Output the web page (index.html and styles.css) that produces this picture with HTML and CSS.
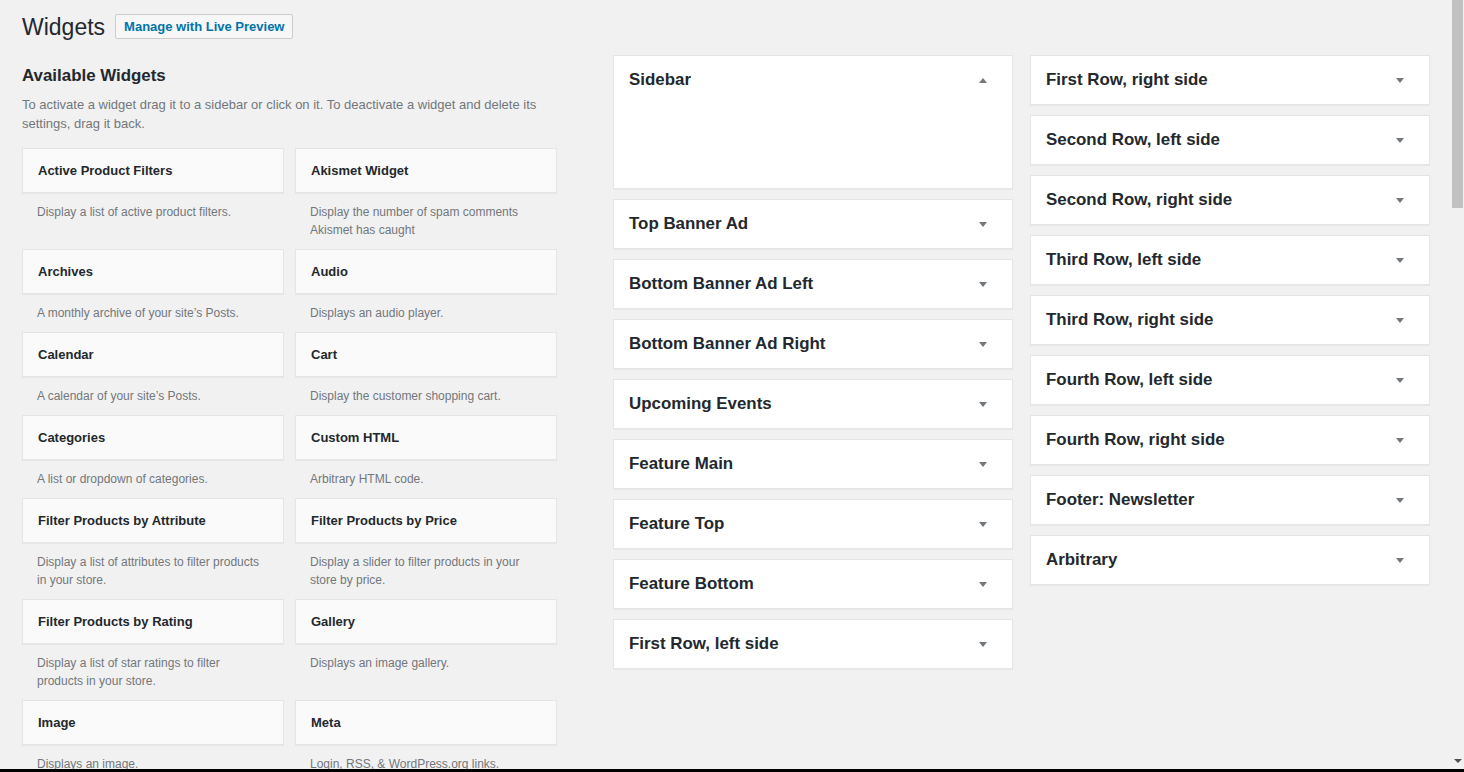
FILE: index.html
```html
<!DOCTYPE html>
<html lang="en">
<head>
<meta charset="utf-8">
<title>Widgets</title>
<link rel="stylesheet" href="styles.css">
</head>
<body>
<div class="wrap">
  <div class="page-header">
    <h1 class="page-title">Widgets</h1>
    <a class="title-action" href="#">Manage with Live Preview</a>
  </div>

  <div class="columns">
    <section class="available">
      <h2 class="section-title">Available Widgets</h2>
      <p class="section-desc">To activate a widget drag it to a sidebar or click on it. To deactivate a widget and delete its settings, drag it back.</p>
      <div class="widget-grid">
        <div class="widget"><div class="widget-top">Active Product Filters</div><div class="widget-desc">Display a list of active product filters.</div></div>
        <div class="widget"><div class="widget-top">Akismet Widget</div><div class="widget-desc">Display the number of spam comments Akismet has caught</div></div>
        <div class="widget"><div class="widget-top">Archives</div><div class="widget-desc">A monthly archive of your site’s Posts.</div></div>
        <div class="widget"><div class="widget-top">Audio</div><div class="widget-desc">Displays an audio player.</div></div>
        <div class="widget"><div class="widget-top">Calendar</div><div class="widget-desc">A calendar of your site’s Posts.</div></div>
        <div class="widget"><div class="widget-top">Cart</div><div class="widget-desc">Display the customer shopping cart.</div></div>
        <div class="widget"><div class="widget-top">Categories</div><div class="widget-desc">A list or dropdown of categories.</div></div>
        <div class="widget"><div class="widget-top">Custom HTML</div><div class="widget-desc">Arbitrary HTML code.</div></div>
        <div class="widget"><div class="widget-top">Filter Products by Attribute</div><div class="widget-desc">Display a list of attributes to filter products in your store.</div></div>
        <div class="widget"><div class="widget-top">Filter Products by Price</div><div class="widget-desc">Display a slider to filter products in your store by price.</div></div>
        <div class="widget"><div class="widget-top">Filter Products by Rating</div><div class="widget-desc">Display a list of star ratings to filter products in your store.</div></div>
        <div class="widget"><div class="widget-top">Gallery</div><div class="widget-desc">Displays an image gallery.</div></div>
        <div class="widget"><div class="widget-top">Image</div><div class="widget-desc">Displays an image.</div></div>
        <div class="widget"><div class="widget-top">Meta</div><div class="widget-desc">Login, RSS, &amp; WordPress.org links.</div></div>
        <div class="widget"><div class="widget-top">Navigation Menu</div><div class="widget-desc">Add a navigation menu to your sidebar.</div></div>
        <div class="widget"><div class="widget-top">Pages</div><div class="widget-desc">A list of your site’s Pages.</div></div>
      </div>
    </section>

    <section class="sidebars">
      <div class="sidebar-box open">
        <div class="sidebar-head"><h3 class="sidebar-name">Sidebar</h3><span class="arrow up"></span></div>
        <div class="sidebar-body"></div>
      </div>
      <div class="sidebar-box"><div class="sidebar-head"><h3 class="sidebar-name">Top Banner Ad</h3><span class="arrow"></span></div></div>
      <div class="sidebar-box"><div class="sidebar-head"><h3 class="sidebar-name">Bottom Banner Ad Left</h3><span class="arrow"></span></div></div>
      <div class="sidebar-box"><div class="sidebar-head"><h3 class="sidebar-name">Bottom Banner Ad Right</h3><span class="arrow"></span></div></div>
      <div class="sidebar-box"><div class="sidebar-head"><h3 class="sidebar-name">Upcoming Events</h3><span class="arrow"></span></div></div>
      <div class="sidebar-box"><div class="sidebar-head"><h3 class="sidebar-name">Feature Main</h3><span class="arrow"></span></div></div>
      <div class="sidebar-box"><div class="sidebar-head"><h3 class="sidebar-name">Feature Top</h3><span class="arrow"></span></div></div>
      <div class="sidebar-box"><div class="sidebar-head"><h3 class="sidebar-name">Feature Bottom</h3><span class="arrow"></span></div></div>
      <div class="sidebar-box"><div class="sidebar-head"><h3 class="sidebar-name">First Row, left side</h3><span class="arrow"></span></div></div>
    </section>

    <section class="sidebars">
      <div class="sidebar-box"><div class="sidebar-head"><h3 class="sidebar-name">First Row, right side</h3><span class="arrow"></span></div></div>
      <div class="sidebar-box"><div class="sidebar-head"><h3 class="sidebar-name">Second Row, left side</h3><span class="arrow"></span></div></div>
      <div class="sidebar-box"><div class="sidebar-head"><h3 class="sidebar-name">Second Row, right side</h3><span class="arrow"></span></div></div>
      <div class="sidebar-box"><div class="sidebar-head"><h3 class="sidebar-name">Third Row, left side</h3><span class="arrow"></span></div></div>
      <div class="sidebar-box"><div class="sidebar-head"><h3 class="sidebar-name">Third Row, right side</h3><span class="arrow"></span></div></div>
      <div class="sidebar-box"><div class="sidebar-head"><h3 class="sidebar-name">Fourth Row, left side</h3><span class="arrow"></span></div></div>
      <div class="sidebar-box"><div class="sidebar-head"><h3 class="sidebar-name">Fourth Row, right side</h3><span class="arrow"></span></div></div>
      <div class="sidebar-box"><div class="sidebar-head"><h3 class="sidebar-name">Footer: Newsletter</h3><span class="arrow"></span></div></div>
      <div class="sidebar-box"><div class="sidebar-head"><h3 class="sidebar-name">Arbitrary</h3><span class="arrow"></span></div></div>
    </section>
  </div>
</div>

<div class="fake-scrollbar" aria-hidden="true">
  <div class="scroll-thumb"></div>
  <div class="scroll-down"></div>
</div>
<div class="bottom-edge" aria-hidden="true"></div>
</body>
</html>
```

FILE: styles.css
```css
html {
  overflow: hidden;
  height: 100%;
}

body {
  margin: 0;
  background: #f1f1f1;
  color: #444;
  font-family: "Liberation Sans", Arial, sans-serif;
  font-size: 13px;
  line-height: 1.4;
  height: 100%;
}

.wrap {
  padding-left: 22px;
}

.page-header {
  display: flex;
  align-items: flex-start;
  padding-top: 12px;
}

.page-title {
  margin: 0;
  font-size: 23px;
  font-weight: 400;
  line-height: 30px;
  color: #23282d;
}

.title-action {
  margin: 2px 0 0 10px;
  padding: 4px 8px;
  border: 1px solid #ccc;
  border-radius: 2px;
  background: #f7f7f7;
  color: #0073aa;
  font-size: 13px;
  font-weight: 700;
  line-height: 15px;
  text-decoration: none;
}

.columns {
  display: flex;
  align-items: flex-start;
  margin-top: 13px;
}

.available {
  width: 535px;
  flex: none;
  margin-right: 56px;
}

.section-title {
  margin: 0;
  padding-top: 11px;
  font-size: 16.9px;
  font-weight: 700;
  line-height: 19px;
  color: #23282d;
}

.section-desc {
  margin: 10px 0 0;
  font-size: 13px;
  line-height: 19px;
  color: #72777c;
}

.widget-grid {
  display: grid;
  grid-template-columns: 262px 262px;
  column-gap: 11px;
  margin-top: 15px;
}

.widget-top {
  box-sizing: border-box;
  height: 45px;
  display: flex;
  align-items: center;
  padding: 0 15px;
  background: #fafafa;
  border: 1px solid #e5e5e5;
  box-shadow: 0 1px 1px rgba(0, 0, 0, 0.04);
  font-size: 13px;
  font-weight: 700;
  line-height: 16px;
  color: #23282d;
}

.widget-desc {
  padding: 10px 15px;
  font-size: 12px;
  line-height: 18px;
  color: #72777c;
}

.sidebars {
  width: 400px;
  flex: none;
  display: flex;
  flex-direction: column;
  gap: 10px;
}

.sidebars + .sidebars {
  margin-left: 17px;
}

.sidebar-box {
  background: #fff;
  border: 1px solid #e5e5e5;
  box-shadow: 0 1px 1px rgba(0, 0, 0, 0.04);
}

.sidebar-head {
  height: 48px;
  display: flex;
  align-items: center;
  justify-content: space-between;
  padding: 0 25px 0 15px;
}

.sidebar-name {
  margin: 0;
  font-size: 16.9px;
  font-weight: 700;
  line-height: 18px;
  color: #23282d;
  white-space: nowrap;
}

.sidebar-body {
  height: 84px;
}

.arrow {
  width: 0;
  height: 0;
  border-left: 4px solid transparent;
  border-right: 4px solid transparent;
  border-top: 5px solid #72777c;
}

.arrow.up {
  border-top: 0;
  border-bottom: 5px solid #72777c;
}

.fake-scrollbar {
  position: fixed;
  top: 0;
  right: 0;
  width: 15px;
  bottom: 3px;
  background: #f1f1f1;
}

.scroll-thumb {
  position: absolute;
  top: 0;
  left: 3px;
  width: 11px;
  height: 208px;
  background: #c1c1c1;
}

.scroll-down {
  position: absolute;
  left: 5px;
  bottom: 6px;
  width: 0;
  height: 0;
  border-left: 4px solid transparent;
  border-right: 4px solid transparent;
  border-top: 4px solid #505050;
}

.bottom-edge {
  position: fixed;
  left: 0;
  right: 0;
  bottom: 0;
  height: 3px;
  background: #000;
}
```
